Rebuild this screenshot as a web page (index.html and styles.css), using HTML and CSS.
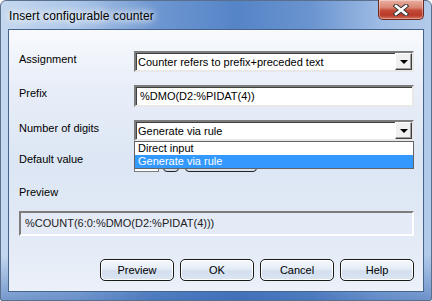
FILE: index.html
```html
<!DOCTYPE html>
<html lang="en">
<head>
  <meta charset="UTF-8">
  <title>Insert configurable counter</title>
  <link rel="stylesheet" href="styles.css">
</head>
<body>
  <div class="window">
    <div class="titlebar">
      <span class="title">Insert configurable counter</span>
      <button class="close-btn" aria-label="Close">
        <svg width="16" height="12" viewBox="0 0 16 12">
          <path d="M3 2 L13 10 M13 2 L3 10" stroke="#3a3a3a" stroke-width="4.6" stroke-linecap="square"/>
          <path d="M3 2 L13 10 M13 2 L3 10" stroke="#fff" stroke-width="2.6" stroke-linecap="square"/>
        </svg>
      </button>
    </div>
    <div class="client">
      <div class="row row-assign">
        <label class="field-label">Assignment</label>
        <div class="combo">
          <span class="combo-text">Counter refers to prefix+preceded text</span>
          <span class="drop-btn"><span class="arrow"></span></span>
        </div>
      </div>
      <div class="row row-prefix">
        <label class="field-label">Prefix</label>
        <div class="textbox">%DMO(D2:%PIDAT(4))</div>
      </div>
      <div class="row row-digits">
        <label class="field-label">Number of digits</label>
        <div class="combo combo-open">
          <span class="combo-text">Generate via rule</span>
          <span class="drop-btn"><span class="arrow"></span></span>
          <ul class="drop-list">
            <li>Direct input</li>
            <li class="selected">Generate via rule</li>
          </ul>
        </div>
      </div>
      <div class="row row-default">
        <label class="field-label">Default value</label>
        <div class="default-ctrls">
          <div class="small-input"></div>
          <button class="spin-btn"></button>
          <button class="wide-btn"></button>
        </div>
      </div>
      <div class="preview-label">Preview</div>
      <div class="preview-box">%COUNT(6:0:%DMO(D2:%PIDAT(4)))</div>
      <div class="actions">
        <button class="dlg-btn">Preview</button>
        <button class="dlg-btn">OK</button>
        <button class="dlg-btn">Cancel</button>
        <button class="dlg-btn">Help</button>
      </div>
    </div>
  </div>
</body>
</html>
```

FILE: styles.css
```css
* { box-sizing: border-box; }
body {
  margin: 0;
  background: #fff;
  font-family: "Liberation Sans", Arial, sans-serif;
  font-size: 11px;
  color: #000;
}
.window {
  width: 432px;
  height: 301px;
  padding: 0 7px 8px 7px;
  border: 1px solid #5a6f8c;
  border-radius: 6px 6px 2px 2px;
  background:
    linear-gradient(to bottom, rgba(255,255,255,0) 85%, rgba(40,90,170,0.5) 100%),
    linear-gradient(to right, #c4d8ef 0%, #aac5e8 18%, #6f98d2 35%, #5584c7 55%, #6a94cf 72%, #9dbbe4 88%, #b3cbea 100%);
  display: flex;
  flex-direction: column;
}
.titlebar {
  height: 28px;
  display: flex;
  align-items: flex-start;
  justify-content: space-between;
}
.title {
  margin-top: 8px;
  padding-left: 1px;
  font-size: 12px;
  letter-spacing: 0.1px;
  text-shadow: 0 0 6px #fff, 0 0 10px #fff, 0 0 14px #fff;
}
.close-btn {
  width: 46px;
  height: 20px;
  margin: -1px 0 0 0;
  border: 1px solid #6a2a22;
  border-top: none;
  border-radius: 0 0 5px 5px;
  background: linear-gradient(to bottom, #e9b0a2 0%, #d98572 40%, #c34a38 55%, #b93a2a 80%, #d4705a 100%);
  box-shadow: inset 0 0 0 1px rgba(255,255,255,0.35);
  display: flex;
  align-items: center;
  justify-content: center;
  padding: 0;
}
.client {
  flex: 1;
  border: 1px solid #46638e;
  background: linear-gradient(to bottom, #f8fafd 0%, #e8eef8 22%, #dce6f4 50%, #e1e9f5 75%, #ebf0f9 100%);
  padding: 0 9px 0 10px;
  display: flex;
  flex-direction: column;
}
.row {
  display: grid;
  grid-template-columns: 115px 1fr;
  align-items: start;
}
.row-assign { margin-top: 21px; }
.row-prefix { margin-top: 13px; }
.row-digits { margin-top: 13px; }
.row-default { margin-top: 10px; }
.field-label {
  padding-top: 2px;
  line-height: 13px;
}
.combo {
  position: relative;
  height: 21px;
  background: #fff;
  border: 2px solid;
  border-color: #7c7c7c #e8e8e8 #e8e8e8 #7c7c7c;
  box-shadow: inset 1px 1px 0 #404040;
  display: flex;
  align-items: center;
  padding-left: 2px;
}
.combo-text {
  flex: 1;
  line-height: 13px;
  padding-top: 1px;
}
.drop-btn {
  width: 17px;
  height: 17px;
  background: #f0f0f0;
  border: 1px solid;
  border-color: #fff #404040 #404040 #fff;
  box-shadow: inset -1px -1px 0 #a0a0a0;
  display: flex;
  align-items: center;
  justify-content: center;
}
.arrow {
  width: 0;
  height: 0;
  border-left: 4px solid transparent;
  border-right: 4px solid transparent;
  border-top: 4px solid #000;
}
.drop-list {
  position: absolute;
  top: 19px;
  left: -2px;
  right: -2px;
  margin: 0;
  padding: 0;
  list-style: none;
  background: #fff;
  border: 1px solid #646464;
  z-index: 5;
}
.drop-list li {
  height: 13px;
  line-height: 13px;
  padding-left: 3px;
}
.drop-list li.selected {
  background: #3399ff;
  color: #fff;
}
.textbox {
  height: 22px;
  background: #fff;
  border: 2px solid;
  border-color: #7c7c7c #e8e8e8 #e8e8e8 #7c7c7c;
  box-shadow: inset 1px 1px 0 #404040;
  padding: 3px 0 0 4px;
  line-height: 13px;
}
.default-ctrls {
  display: flex;
  gap: 4px;
  height: 21px;
}
.small-input {
  width: 25px;
  background: #fff;
  border: 1px solid #7c7c7c;
}
.spin-btn,
.wide-btn {
  padding: 0;
  border: 1px solid #222;
  border-radius: 4px;
  background: linear-gradient(to bottom, #f4f7fb, #d6e1f0);
}
.spin-btn { width: 16px; }
.wide-btn { width: 72px; margin-left: 2px; }
.preview-label {
  margin-top: 14px;
  line-height: 13px;
}
.preview-box {
  margin-top: 12px;
  height: 25px;
  border: 2px solid;
  border-color: #7c7c7c #fff #fff #7c7c7c;
  padding: 4px 0 0 4px;
  line-height: 13px;
  color: #222;
  background: #e4ebf6;
}
.actions {
  margin-top: 23px;
  display: flex;
  justify-content: flex-end;
  gap: 6px;
}
.dlg-btn {
  width: 74px;
  height: 22px;
  padding: 0;
  font-family: "Liberation Sans", Arial, sans-serif;
  font-size: 11px;
  color: #000;
  border: 1px solid #1a1a1a;
  border-radius: 5px;
  background: linear-gradient(to bottom, #f6f9fd 0%, #e4ecf7 45%, #d3dfef 55%, #dbe5f3 100%);
  box-shadow: inset 0 0 0 1px #fff;
}
```
